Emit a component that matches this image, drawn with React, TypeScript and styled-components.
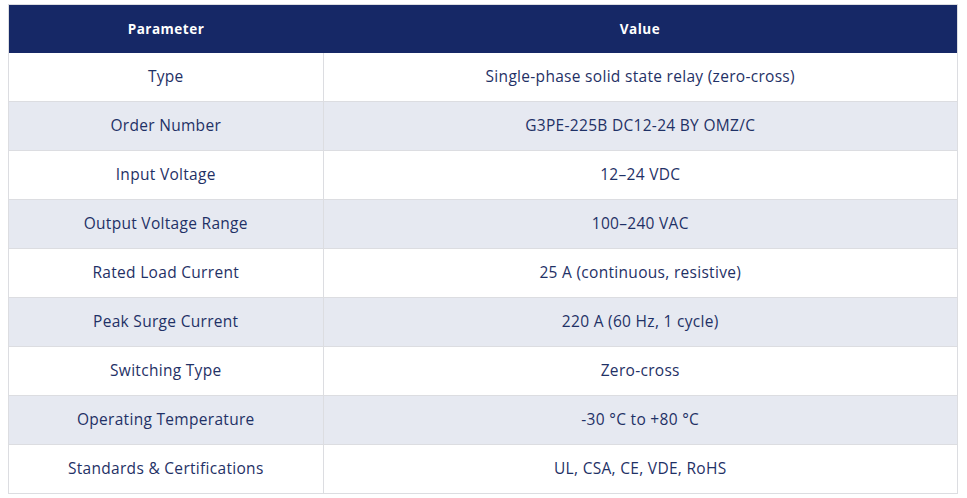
import React from "react";
import styled, { createGlobalStyle } from "styled-components";

const GlobalStyle = createGlobalStyle`
  html, body { margin: 0; padding: 0; background: #ffffff; }
  body { padding: 4px 9px 0 8px; font-family: "Open Sans", "Noto Sans", sans-serif; }
`;

const Table = styled.table`
  width: 950px;
  border-collapse: collapse;
  border: 1px solid #dcdde1;
  table-layout: fixed;
`;

const HeadCell = styled.th<{ $w?: string }>`
  background: #162866;
  color: #ffffff;
  font-weight: 700;
  font-size: 13.5px;
  letter-spacing: 0.5px;
  height: 48px;
  padding: 0;
  text-align: center;
  width: ${(p) => p.$w || "auto"};
`;

const Row = styled.tr<{ $striped: boolean }>`
  background: ${(p) => (p.$striped ? "#e6e9f1" : "#ffffff")};
  border-bottom: 1px solid #dcdde1;
`;

const Cell = styled.td`
  height: 46px;
  padding: 0 0 2px;
  text-align: center;
  color: #1f3166;
  font-size: 15.5px;
  letter-spacing: 0.3px;
  font-weight: 400;
  border-right: 1px solid #dcdde1;
  &:last-child { border-right: none; }
`;

const rows: [string, string][] = [
  ["Type", "Single-phase solid state relay (zero-cross)"],
  ["Order Number", "G3PE-225B DC12-24 BY OMZ/C"],
  ["Input Voltage", "12–24 VDC"],
  ["Output Voltage Range", "100–240 VAC"],
  ["Rated Load Current", "25 A (continuous, resistive)"],
  ["Peak Surge Current", "220 A (60 Hz, 1 cycle)"],
  ["Switching Type", "Zero-cross"],
  ["Operating Temperature", "-30 °C to +80 °C"],
  ["Standards & Certifications", "UL, CSA, CE, VDE, RoHS"],
];

export default function App() {
  return (
    <>
      <GlobalStyle />
      <Table>
        <thead>
          <tr>
            <HeadCell $w="314px">Parameter</HeadCell>
            <HeadCell>Value</HeadCell>
          </tr>
        </thead>
        <tbody>
          {rows.map(([k, v], i) => (
            <Row key={k} $striped={i % 2 === 1}>
              <Cell>{k}</Cell>
              <Cell>{v}</Cell>
            </Row>
          ))}
        </tbody>
      </Table>
    </>
  );
}
